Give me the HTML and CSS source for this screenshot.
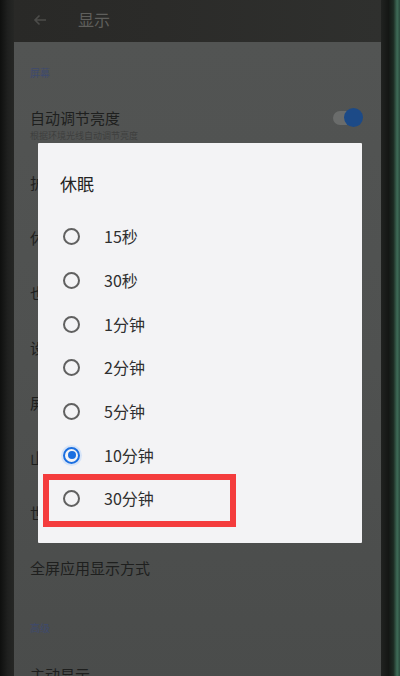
FILE: index.html
```html
<!DOCTYPE html>
<html lang="zh">
<head>
<meta charset="utf-8">
<title>显示</title>
<link rel="stylesheet" href="styles.css">
</head>
<body>
<div class="phone">
  <div class="bezel-left"></div>
  <div class="screen">
    <header class="appbar">
      <svg class="back" width="14" height="12" viewBox="0 0 14 12"><path d="M13 6H2M6.5 1.5L2 6l4.5 4.5" fill="none" stroke="#4c4c4a" stroke-width="1.6"/></svg>
      <span class="appbar-title">显示</span>
    </header>
    <main class="content">
      <div class="section-label first">屏幕</div>
      <div class="row two-line">
        <div class="row-text">
          <div class="row-title">自动调节亮度</div>
          <div class="row-sub">根据环境光线自动调节亮度</div>
        </div>
        <div class="toggle"><span class="knob"></span></div>
      </div>
      <div class="row"><div class="row-title">护眼</div></div>
      <div class="row"><div class="row-title">休眠</div></div>
      <div class="row"><div class="row-title">也</div></div>
      <div class="row"><div class="row-title">设置</div></div>
      <div class="row"><div class="row-title">屏保</div></div>
      <div class="row"><div class="row-title">山</div></div>
      <div class="row"><div class="row-title">世界</div></div>
      <div class="row"><div class="row-title">全屏应用显示方式</div></div>
      <div class="section-label">高级</div>
      <div class="row last"><div class="row-title">主动显示</div></div>

      <div class="dialog">
        <div class="dialog-title">休眠</div>
        <ul class="options">
          <li class="option"><span class="radio"></span><span class="option-label">15秒</span></li>
          <li class="option"><span class="radio"></span><span class="option-label">30秒</span></li>
          <li class="option"><span class="radio"></span><span class="option-label">1分钟</span></li>
          <li class="option"><span class="radio"></span><span class="option-label">2分钟</span></li>
          <li class="option"><span class="radio"></span><span class="option-label">5分钟</span></li>
          <li class="option"><span class="radio checked"></span><span class="option-label">10分钟</span></li>
          <li class="option"><span class="radio"></span><span class="option-label">30分钟</span></li>
        </ul>
        <div class="highlight"></div>
      </div>
    </main>
  </div>
  <div class="bezel-right"></div>
</div>
</body>
</html>
```

FILE: styles.css
```css
html, body {
  margin: 0;
  padding: 0;
}
body {
  width: 400px;
  height: 676px;
  overflow: hidden;
  background: #121212;
  font-family: "Noto Sans CJK SC", "Noto Sans", sans-serif;
}
.phone {
  display: flex;
  width: 400px;
  height: 676px;
}
.bezel-left {
  width: 14px;
  flex: none;
  background: linear-gradient(90deg, #0e0f0e 0%, #1f201f 55%, #262725 100%);
}
.bezel-right {
  width: 19px;
  flex: none;
  background: linear-gradient(90deg, #202220 0%, #141614 40%, #1c2a22 65%, #3f6c58 85%, #2a4a3c 100%);
}
.screen {
  flex: 1;
  display: flex;
  flex-direction: column;
  background: #2a2a28;
  overflow: hidden;
}
.appbar {
  height: 42px;
  flex: none;
  display: flex;
  align-items: center;
  padding-left: 19px;
  background: linear-gradient(90deg, #292927 0%, #2b2b29 40%, #2f302e 100%);
}
.back {
  margin-top: -2px;
}
.appbar-title {
  margin-left: 31px;
  font-size: 16px;
  color: #5f5f5c;
  margin-top: -4px;
}
.content {
  position: relative;
  flex: 1;
  display: flex;
  flex-direction: column;
  padding-left: 16px;
  background: linear-gradient(180deg, #525453 0%, #4f5150 50%, #4a4c4b 100%);
}
.section-label {
  font-size: 10px;
  line-height: 14px;
  color: #3e4a6e;
  padding-top: 26px;
  flex: none;
}
.section-label.first {
  padding-top: 24px;
  padding-bottom: 16px;
}
.row {
  height: 55px;
  flex: none;
  display: flex;
  align-items: center;
}
.row.two-line {
  height: 59px;
  align-items: flex-start;
  padding-top: 12px;
  box-sizing: border-box;
  padding-right: 22px;
  justify-content: space-between;
}
.row.last {
  height: auto;
  align-items: flex-start;
  padding-top: 30px;
}
.row-title {
  font-size: 15px;
  line-height: 20px;
  color: #1e1f1e;
}
.row-sub {
  font-size: 9px;
  line-height: 14px;
  color: #3e3f3e;
  margin-top: 1px;
}
.toggle {
  margin-top: 3px;
  width: 26px;
  height: 14px;
  border-radius: 7px;
  background: #6a6c6b;
  position: relative;
}
.knob {
  position: absolute;
  right: -4px;
  top: -3px;
  width: 19px;
  height: 19px;
  border-radius: 50%;
  background: #1c4a87;
}
.dialog {
  position: absolute;
  left: 24px;
  top: 101px;
  width: 324px;
  height: 400px;
  background: #f3f3f5;
  border-radius: 1px;
}
.dialog-title {
  padding: 29px 0 0 22px;
  font-size: 17px;
  line-height: 24px;
  color: #232323;
}
.options {
  list-style: none;
  margin: 19px 0 0;
  padding: 0;
}
.option {
  height: 43.7px;
  display: flex;
  align-items: center;
  padding-left: 25px;
}
.radio {
  width: 17px;
  height: 17px;
  box-sizing: border-box;
  border: 2px solid #606060;
  border-radius: 50%;
  flex: none;
  position: relative;
}
.radio.checked {
  border-color: #1b6fe0;
  box-shadow: 0 0 0 2px #d6e4f8;
}
.radio.checked::after {
  content: "";
  position: absolute;
  left: 2.5px;
  top: 2.5px;
  width: 8px;
  height: 8px;
  border-radius: 50%;
  background: #1b6fe0;
}
.option-label {
  margin-left: 24px;
  font-size: 16px;
  color: #2f2f2f;
  margin-top: -1px;
}
.highlight {
  position: absolute;
  left: 5px;
  top: 331px;
  width: 193px;
  height: 53px;
  box-sizing: border-box;
  border: 6.5px solid #f43c3d;
}
```
